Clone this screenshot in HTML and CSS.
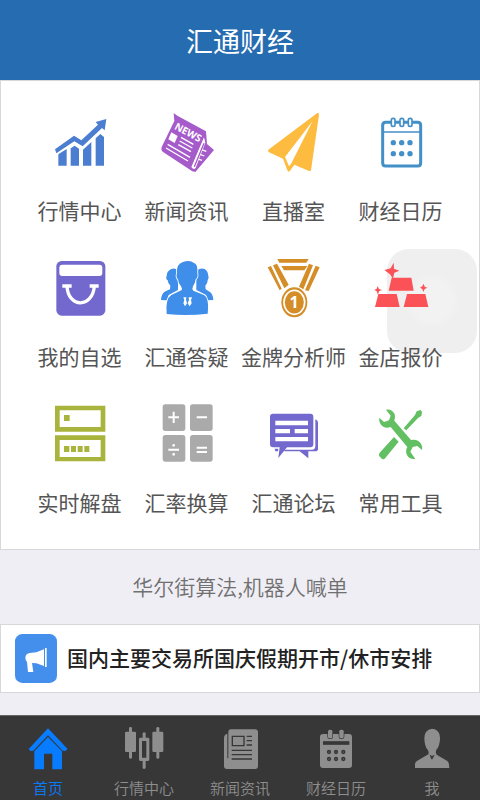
FILE: index.html
```html
<!DOCTYPE html>
<html lang="zh-CN">
<head>
<meta charset="utf-8">
<meta name="viewport" content="width=device-width, initial-scale=1">
<title>汇通财经</title>
<link rel="stylesheet" href="styles.css">
</head>
<body>
<header class="topbar"><h1 class="topbar-title">汇通财经</h1></header>
<main class="content">
  <nav class="menu">
    <a class="tile" href="#market">
      <svg class="tile-icon blue" viewBox="51 30 192 192" aria-hidden="true"><path d="M72 148 129 107 151 121 201 74 194 66 226 57 221 91 213 84 155 139 130 124 76 160Z"/><path d="M82 163 107 147V197H82ZM119 145 131 137 144 146V197H119ZM156 149 181 126V197H156ZM194 115 208 102 219 111V197H194Z"/></svg>
      <span class="tile-label">行情中心</span>
    </a>
    <a class="tile" href="#news">
      <svg class="tile-icon purple" viewBox="372 30 192 192" aria-hidden="true"><path d="M428 39 439 47 525 94 528 132 549 150 493 216 484 214 395 155Q389 150 392 141L430 63Z"/><path class="white" d="M421 97 440 108 431 129 412 118ZM519 112 481 201Q488 211 494 204L523 128Z"/><path class="line-white" d="M450 112 487 133M446 123 484 144M442 134 480 155M410 133 477 172M405 144 471 183M509 148 526 154M502 161 520 168M495 175 513 181" stroke-width="4"/><path class="line-purple" d="M519 130 490 200" stroke-width="4"/><text class="news-word" x="428" y="86" transform="rotate(28 428 86)">NEWS</text></svg>
      <span class="tile-label">新闻资讯</span>
    </a>
    <a class="tile" href="#live">
      <svg class="tile-icon orange" viewBox="63 30 192 192" aria-hidden="true"><path d="M229 39Q235 38 234 44L210 211Q208 214 204 213L160 194 146 214Q142 217 139 211L126 176 84 157Q78 153 84 148Z"/><path class="white" d="M215 63 132 171 144 199 150 192Z"/></svg>
      <span class="tile-label">直播室</span>
    </a>
    <a class="tile" href="#calendar">
      <svg class="tile-icon sky" viewBox="384 30 192 192" aria-hidden="true"><path class="line-sky" d="M434 67H530Q539 67 539 76V188Q539 198 530 198H434Q425 198 425 188V76Q425 67 434 67Z" stroke-width="9"/><path class="line-sky" d="M425 96H539" stroke-width="5"/><g class="ring"><rect x="451" y="55" width="11" height="24" rx="5"/><rect x="477" y="55" width="11" height="24" rx="5"/><rect x="502" y="55" width="11" height="24" rx="5"/></g><circle cx="457" cy="128" r="8"/><circle cx="482" cy="128" r="8"/><circle cx="507" cy="128" r="8"/><circle cx="457" cy="161" r="8"/><circle cx="482" cy="161" r="8"/><circle cx="507" cy="161" r="8"/></svg>
      <span class="tile-label">财经日历</span>
    </a>
    <a class="tile" href="#watchlist">
      <svg class="tile-icon violet" viewBox="51 33 192 192" aria-hidden="true"><rect x="76" y="48" width="147" height="164" rx="16"/><rect class="white" x="85" y="59" width="129" height="34" rx="9"/><path class="line-white" d="M94 123H122M176 123H203M108 124C112 190 184 190 190 124" stroke-width="10"/></svg>
      <span class="tile-label">我的自选</span>
    </a>
    <a class="tile" href="#answers">
      <svg class="tile-icon azure" viewBox="372 33 192 192" aria-hidden="true"><path d="M390 165Q391 144 405 138L417 133 418 122Q411 116 410 106Q403 101 407 93Q407 78 421 72Q433 68 441 78V135L413 150 407 166ZM547 165Q546 144 532 138L524 133 523 122Q530 116 530 106Q535 101 532 93Q531 78 521 72Q508 68 496 78V135L525 150 530 166Z"/><path class="outlined" d="M407 207Q403 161 421 150L451 136Q455 132 450 124Q442 116 441 103Q434 97 438 84Q436 58 454 52Q476 43 489 54Q501 57 499 84Q502 97 494 103Q492 117 486 124Q482 132 487 137L519 150Q535 159 530 206Q469 213 407 207Z"/><path class="white" d="M457 157H466L465 164 468 175 462 184 457 175 460 165ZM473 157H483L480 165 482 175 476 184 470 175 474 165Z"/></svg>
      <span class="tile-label">汇通答疑</span>
    </a>
    <a class="tile" href="#analysts">
      <svg class="tile-icon gold" viewBox="63 33 192 192" aria-hidden="true"><path d="M109 42H203L196 53H115ZM121 63H199L190 76H129ZM80 67 90 63 122 131 116 136ZM96 61 108 56 143 119 130 130ZM204 56 216 61 187 133 174 125ZM224 62 236 67 203 138 192 136Z"/><circle cx="160" cy="172" r="42" class="white"/><ellipse cx="160" cy="172" rx="39" ry="45"/><ellipse class="line-white" cx="160" cy="172" rx="31" ry="36" stroke-width="5"/><text class="medal-rank" x="159" y="190" text-anchor="middle">1</text></svg>
      <span class="tile-label">金牌分析师</span>
    </a>
    <div class="tile-slot">
      <button class="assist" type="button" aria-label="辅助触控"></button>
      <a class="tile tile-raised" href="#gold">
        <svg class="tile-icon red" viewBox="384 33 192 192" aria-hidden="true"><path d="M452 98H511L518 137H443ZM412 147H467L476 186H402ZM498 147H553L562 186H488Z"/><path d="M458 53 459 71 475 77 460 83 456 101 447 88 430 75 449 70ZM410 123 414 132 423 135 414 139 411 149 407 139 400 135 407 131ZM548 116 551 125 559 128 551 132 547 141 544 132 537 128 544 124Z"/></svg>
        <span class="tile-label">金店报价</span>
      </a>
    </div>
    <a class="tile" href="#live-analysis">
      <svg class="tile-icon olive" viewBox="51 36 192 192" aria-hidden="true"><path fill-rule="evenodd" d="M72 47H223V125H72ZM86 61V111H209V61ZM72 136H223V214H72ZM86 150V201H209V150Z"/><path d="M99 75H116V93H99ZM99 168H115V186H99ZM120 168H135V186H120ZM140 168H155V186H140ZM160 168H175V186H160Z"/></svg>
      <span class="tile-label">实时解盘</span>
    </a>
    <a class="tile" href="#exchange">
      <svg class="tile-icon grey" viewBox="372 36 192 192" aria-hidden="true"><rect x="395" y="43" width="68" height="80" rx="8"/><rect x="477" y="43" width="68" height="80" rx="8"/><rect x="395" y="135" width="68" height="80" rx="8"/><rect x="477" y="135" width="68" height="80" rx="8"/><path class="line-white" d="M412 82H444M428 65V99M497 82H528M412 179H444M497 173H528M497 186H528" stroke-width="6"/><circle class="white" cx="428" cy="166" r="4"/><circle class="white" cx="428" cy="193" r="4"/></svg>
      <span class="tile-label">汇率换算</span>
    </a>
    <a class="tile" href="#forum">
      <svg class="tile-icon violet" viewBox="63 36 192 192" aria-hidden="true"><path d="M220 88H223Q231 90 231 98V176Q231 184 222 184H202V205L176 184H130V179H213Q223 179 223 168V88ZM101 176H112L111 184H103Z"/><path d="M96 71H208Q217 71 217 80V163Q217 172 208 172H138L112 204 116 172H96Q87 172 87 163V80Q87 71 96 71Z"/><path class="white" d="M103 92H201V106H103ZM103 117H147V130H103ZM161 117H201V130H161ZM103 141H201V154H103Z"/></svg>
      <span class="tile-label">汇通论坛</span>
    </a>
    <a class="tile" href="#tools">
      <svg class="tile-icon green" viewBox="384 36 192 192" aria-hidden="true"><path d="M539 60 543 66 541 78 531 84 496 121 488 115 522 75 527 64ZM459 141 473 155 431 206Q426 210 421 205L415 199Q412 194 416 188Z"/><path d="M435 59Q453 56 461 73Q464 83 460 92L510 150Q530 146 540 161Q545 168 543 180L529 168 515 171 508 185 523 207Q504 209 498 195Q492 183 499 171L449 111Q429 118 418 101Q413 93 415 83L429 96 444 91 449 77Z"/></svg>
      <span class="tile-label">常用工具</span>
    </a>
  </nav>
  <p class="slogan">华尔街算法,机器人喊单</p>
  <a class="notice" href="#notice">
    <svg class="notice-icon" viewBox="0 0 126 147" aria-hidden="true"><rect class="notice-bg" width="126" height="147" rx="22"/><path class="white" d="M90 42H95V99H90ZM87 46V96L64 88 51 87 55 114H39L36 84Q31 80 31 70Q33 58 44 57L64 55Z"/></svg>
    <span class="notice-text">国内主要交易所国庆假期开市/休市安排</span>
  </a>
</main>
<nav class="tabs">
  <a class="tab active" href="#home" aria-current="page">
    <svg class="tab-icon" viewBox="72 57 144 144" aria-hidden="true"><path d="M144 70 203 132 196 138 188 137 144 91 100 137 91 138 86 132Z"/><path d="M144 96 186 139V193H157V146H132V193H103V139Z"/></svg>
    <span class="tab-label">首页</span>
  </a>
  <a class="tab" href="#market">
    <svg class="tab-icon" viewBox="360 57 144 144" aria-hidden="true"><rect x="375" y="80" width="33" height="61" rx="4"/><rect x="387" y="66" width="9" height="95" rx="4"/><rect x="457" y="80" width="33" height="61" rx="4"/><rect x="469" y="66" width="9" height="95" rx="4"/><path fill-rule="evenodd" d="M428 84Q432 79 437 84V98H444Q448 98 448 102V163Q448 168 444 168H437V189Q432 195 428 189V168H421Q417 168 417 163V102Q417 98 421 98H428ZM426 108V158H439V108Z"/></svg>
    <span class="tab-label">行情中心</span>
  </a>
  <a class="tab" href="#news">
    <svg class="tab-icon" viewBox="-72 57 144 144" aria-hidden="true"><path d="M-27 73H45Q54 73 54 82V183Q54 192 45 192H-39Q-48 192-48 183V99Q-48 88-38 86V160H-35V82Q-35 73-27 73Z"/><path class="line-dark" d="M-23 94H12V122H-23ZM20 94H36M20 107H36M20 120H36M-25 136H36M-25 149H36M-25 162H36" stroke-width="4"/></svg>
    <span class="tab-label">新闻资讯</span>
  </a>
  <a class="tab" href="#calendar">
    <svg class="tab-icon" viewBox="216 57 144 144" aria-hidden="true"><rect x="240" y="87" width="96" height="102" rx="9"/><g class="tab-ring"><rect x="264" y="74" width="13" height="26" rx="5"/><rect x="298" y="74" width="13" height="26" rx="5"/></g><path class="line-dark" d="M249 114H328" stroke-width="11"/><g class="line-dark" stroke-width="5"><circle cx="267" cy="141" r="4"/><circle cx="288" cy="141" r="4"/><circle cx="310" cy="141" r="4"/><circle cx="267" cy="162" r="4"/><circle cx="288" cy="162" r="4"/><circle cx="310" cy="162" r="4"/></g></svg>
    <span class="tab-label">财经日历</span>
  </a>
  <a class="tab" href="#me">
    <svg class="tab-icon" viewBox="504 57 144 144" aria-hidden="true"><path d="M525 189V177Q526 170 532 167L565 148Q568 141 562 133Q554 123 553 101Q553 74 576 71Q601 73 600 101Q599 123 590 133Q585 142 590 149L621 167Q628 171 628 189Z"/><path class="dark" d="M569 149 576 153 584 149 579 159 576 164 572 158Z"/></svg>
    <span class="tab-label">我</span>
  </a>
</nav>
</body>
</html>
```
FILE: styles.css
```css
* {
  box-sizing: border-box;
}

body {
  margin: 0;
  min-height: 100vh;
  display: flex;
  flex-direction: column;
  background: #efeef4;
  font-family: "Noto Sans CJK SC", "Noto Sans", sans-serif;
}

a {
  color: inherit;
  text-decoration: none;
}

.topbar {
  padding: 21px 0 19px;
  background: #266cb1;
  color: #fff;
  text-align: center;
}

.topbar-title {
  margin: 0;
  font-size: 27px;
  line-height: 40px;
  font-weight: 400;
}

.menu {
  display: grid;
  grid-template-columns: repeat(4, 1fr);
  row-gap: 31px;
  padding: 29px 25px 32px;
  background: #fff;
  border: 1px solid #d8d8da;
}

.tile {
  display: flex;
  flex-direction: column;
  align-items: center;
  gap: 21px;
}

.tile-icon {
  width: 64px;
  height: 64px;
}

.tile-label {
  font-size: 21px;
  line-height: 30px;
  color: #555;
  white-space: nowrap;
}

.tile-slot {
  position: relative;
}

.tile-raised {
  position: relative;
}

.assist {
  position: absolute;
  top: -7px;
  right: -23px;
  width: 90px;
  height: 104px;
  padding: 0;
  border: 0;
  border-radius: 22px;
  background: radial-gradient(circle, #f2f2f2 20px, #efefef 28px);
}

.blue { fill: #4b7dd1; }
.purple { fill: #a65bcb; }
.orange { fill: #fdbb3f; }
.sky { fill: #438fc8; }
.violet { fill: #7368cd; }
.azure { fill: #3f8eea; }
.gold { fill: #d48d27; }
.red { fill: #fb5257; }
.olive { fill: #a8b43b; }
.grey { fill: #aaa; }
.green { fill: #62bf62; }
.white { fill: #fff; }
.dark { fill: #373737; }

.line-white { fill: none; stroke: #fff; }
.line-purple { fill: none; stroke: #a65bcb; }
.line-sky { fill: none; stroke: #438fc8; }
.line-dark { fill: none; stroke: #373737; }

.ring {
  fill: #fff;
  stroke: #438fc8;
  stroke-width: 5px;
}

.outlined {
  stroke: #fff;
  stroke-width: 5px;
  paint-order: stroke;
}

.news-word {
  fill: #fff;
  font: bold 30px "Open Sans", sans-serif;
}

.medal-rank {
  fill: #fff;
  font: bold 48px "Open Sans", sans-serif;
}

.slogan {
  margin: 0;
  padding: 21px 0 23px;
  text-align: center;
  font-size: 21px;
  line-height: 30px;
  font-weight: 350;
  color: #707070;
}

.notice {
  display: flex;
  align-items: center;
  gap: 10px;
  padding: 9px 14px;
  background: #fff;
  border: 1px solid #d8d8da;
}

.notice-icon {
  flex: none;
  width: 42px;
  height: 49px;
}

.notice-bg {
  fill: #448fec;
}

.notice-text {
  padding-bottom: 3px;
  font-size: 21px;
  line-height: 30px;
  font-weight: 500;
  color: #222;
}

.tabs {
  display: flex;
  margin-top: auto;
  background: #373737;
  border-top: 1px solid #666;
  color: #8e8e8e;
}

.tab {
  flex: 1;
  display: flex;
  flex-direction: column;
  align-items: center;
  gap: 4px;
  padding-top: 8px;
}

.tab.active {
  color: #087cff;
}

.tab-icon {
  width: 48px;
  height: 48px;
  fill: currentColor;
}

.tab-ring {
  stroke: #373737;
  stroke-width: 4px;
  paint-order: stroke;
}

.tab-label {
  font-size: 15px;
  line-height: 24px;
  font-weight: 350;
}
```
